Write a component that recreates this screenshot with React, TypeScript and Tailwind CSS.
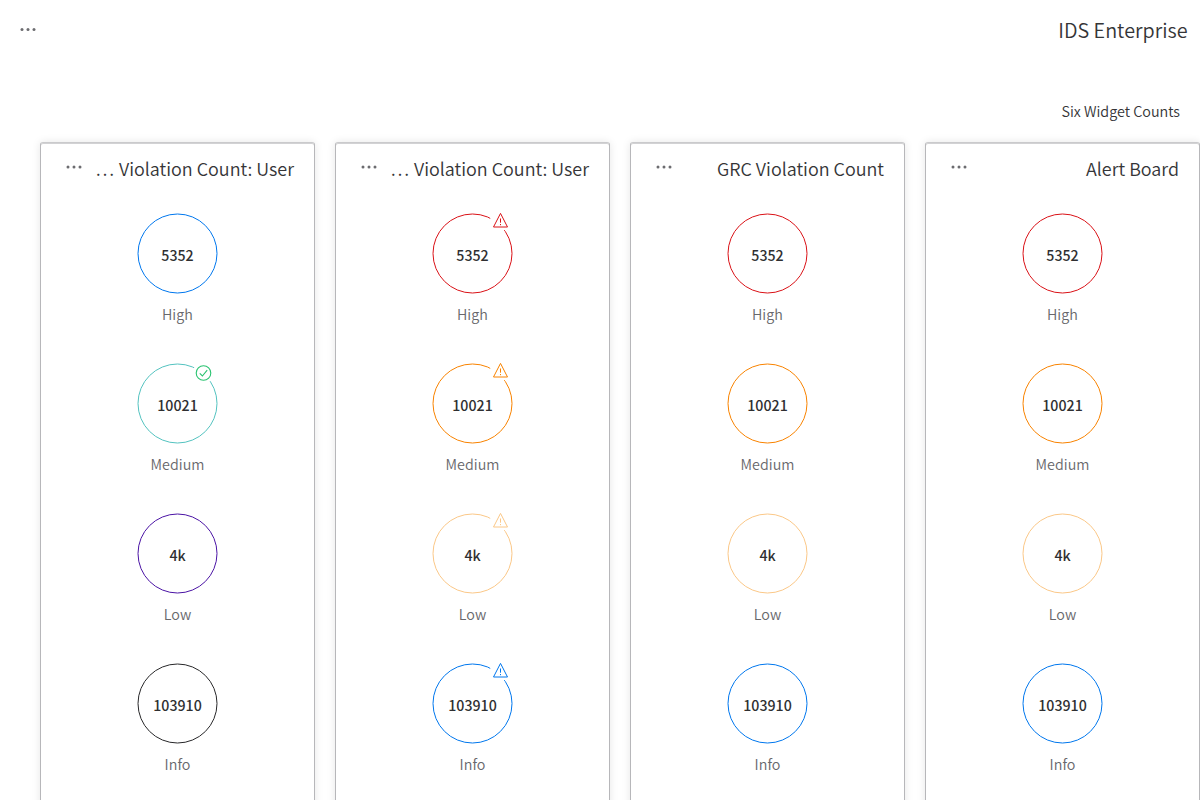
type BadgeKind = 'alert' | 'ok';
interface Count {
  value: string;
  label: string;
  color: string;
  badge?: BadgeKind;
}
interface Widget {
  title: string;
  truncated?: boolean;
  counts: Count[];
}

const RED = '#da1217';
const ORANGE = '#f98300';
const SAND = '#fbc888';
const BLUE = '#0077ee';
const GREEN = '#2ac371';

const standard: Count[] = [
  { value: '5352', label: 'High', color: RED },
  { value: '10021', label: 'Medium', color: ORANGE },
  { value: '4k', label: 'Low', color: SAND },
  { value: '103910', label: 'Info', color: BLUE },
];

const widgets: Widget[] = [
  {
    title: 'Violation Count: User',
    truncated: true,
    counts: [
      { value: '5352', label: 'High', color: BLUE },
      { value: '10021', label: 'Medium', color: '#54c3c0', badge: 'ok' },
      { value: '4k', label: 'Low', color: '#4b14a5' },
      { value: '103910', label: 'Info', color: '#28282a' },
    ],
  },
  {
    title: 'Violation Count: User',
    truncated: true,
    counts: standard.map((c) => ({ ...c, badge: 'alert' as const })),
  },
  { title: 'GRC Violation Count', counts: standard },
  { title: 'Alert Board', counts: standard },
];

function More({ cy = 9 }: { cy?: number }) {
  return (
    <svg width="18" height="18" viewBox="0 0 18 18" fill="#6c6c70" className="block shrink-0">
      <circle cx="3" cy={cy} r="1.5" />
      <circle cx="9" cy={cy} r="1.5" />
      <circle cx="15" cy={cy} r="1.5" />
    </svg>
  );
}

function Badge({ kind, color }: { kind: BadgeKind; color: string }) {
  if (kind === 'ok') {
    return (
      <svg width="22" height="22" viewBox="0 0 22 22" fill="none" className="absolute top-[-2px] left-[54px]">
        <circle cx="11" cy="11" r="10.5" fill="white" />
        <circle cx="11.5" cy="11" r="7.3" stroke={GREEN} strokeWidth="1.1" />
        <path d="M7.8 11.3l2.6 2.7 4.8-5.9" stroke={GREEN} strokeWidth="1.1" />
      </svg>
    );
  }
  return (
    <svg width="22" height="22" viewBox="0 0 22 22" fill="none" className="absolute top-[-4px] left-[56px]">
      <circle cx="11" cy="11" r="10.3" fill="white" />
      <path d="M11.5 3.9L18.5 17.5H4.5Z" transform="translate(0 -.5)" stroke={color} />
      <path d="M11.5 8.5v4.2M11.5 14v1.2" stroke={color} />
    </svg>
  );
}

function Ring({ count }: { count: Count }) {
  return (
    <div className="flex h-[150px] flex-col items-center">
      <div className="relative flex size-[79px] items-center justify-center">
        <svg width="79" height="79" viewBox="0 0 79 79" className="absolute inset-0 overflow-visible">
          <circle cx="39.5" cy="39.5" r="39.5" fill="none" stroke={count.color} />
        </svg>
        {count.badge && <Badge kind={count.badge} color={count.color} />}
        <span className="relative top-[2px] text-[14.2px] leading-[19px] font-medium text-[#2f2f31]">{count.value}</span>
      </div>
      <span className="mt-[11px] text-[14.3px] leading-5 font-[350] tracking-[0.08px] text-[#68686c]">{count.label}</span>
    </div>
  );
}

export default function App() {
  return (
    <div className="h-[800px] w-[1200px] overflow-hidden bg-white font-['Noto_Sans_CJK_SC','Source_Sans_Pro',sans-serif] text-[#353537]">
      <header className="flex h-[60px] items-center justify-between pr-[12.5px] pl-[19px]">
        <More cy={8.5} />
        <h1 className="text-[19.8px] leading-6 font-[350]">IDS Enterprise</h1>
      </header>
      <div className="flex h-[82px] items-end justify-end pr-5 pb-[21px]">
        <h2 className="text-[14.35px] leading-5 font-[350]">Six Widget Counts</h2>
      </div>
      <main className="flex gap-5 pl-10">
        {widgets.map((w, i) => (
          <section
            key={i}
            className="h-[700px] w-[275px] shrink-0 rounded-[3px] border border-[#b7b7ba] border-t-[#cacacc] bg-white shadow-[0_0_8px_rgba(0,0,0,0.1),inset_0_1px_0_#d2d2d4]"
          >
            <div className="flex h-[71px] items-start justify-between pr-5 pl-6">
              <div className="mt-[15px]">
                <More />
              </div>
              <h3 className="mt-[13px] text-[17.95px] leading-6 font-[350] whitespace-nowrap">
                {w.truncated && <span className="mr-px">… </span>}
                {w.title}
              </h3>
            </div>
            {w.counts.map((c) => (
              <Ring key={c.label} count={c} />
            ))}
          </section>
        ))}
      </main>
    </div>
  );
}
